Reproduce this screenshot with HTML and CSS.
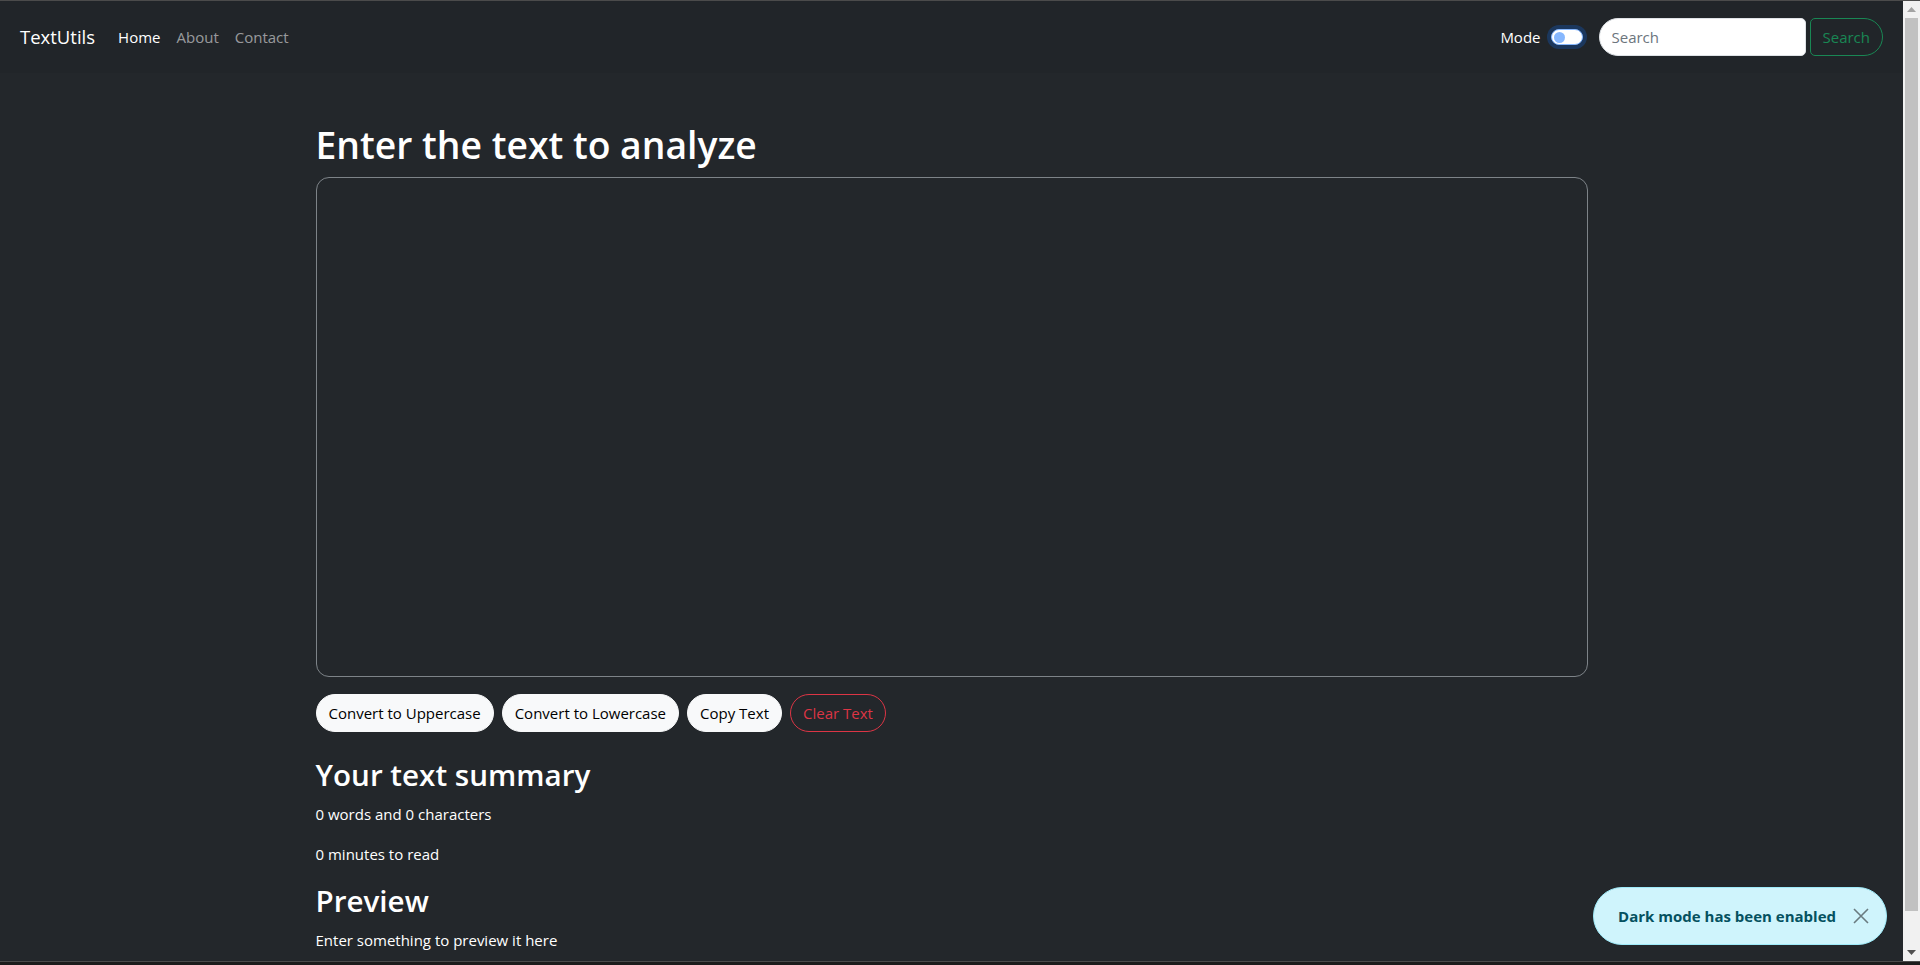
FILE: index.html
```html
<!DOCTYPE html>
<html lang="en">
<head>
<meta charset="utf-8">
<title>TextUtils</title>
<link rel="stylesheet" href="styles.css">
</head>
<body>
<div class="page">
  <nav class="navbar">
    <div class="nav-left">
      <a class="brand" href="#">TextUtils</a>
      <ul class="nav-links">
        <li><a class="nav-link active" href="#">Home</a></li>
        <li><a class="nav-link" href="#">About</a></li>
        <li><a class="nav-link" href="#">Contact</a></li>
      </ul>
    </div>
    <div class="nav-right">
      <div class="mode">
        <span class="mode-label">Mode</span>
        <span class="switch"><span class="knob"></span></span>
      </div>
      <form class="search">
        <input class="search-input" type="search" placeholder="Search">
        <button class="search-btn" type="button">Search</button>
      </form>
    </div>
  </nav>

  <main class="container">
    <h1 class="title">Enter the text to analyze</h1>
    <textarea class="textarea"></textarea>
    <div class="actions">
      <button class="btn btn-light" type="button">Convert to Uppercase</button>
      <button class="btn btn-light" type="button">Convert to Lowercase</button>
      <button class="btn btn-light" type="button">Copy Text</button>
      <button class="btn btn-danger" type="button">Clear Text</button>
    </div>
    <section class="summary">
      <h2 class="subtitle">Your text summary</h2>
      <p class="line">0 words and 0 characters</p>
      <p class="line">0 minutes to read</p>
      <h2 class="subtitle">Preview</h2>
      <p class="line">Enter something to preview it here</p>
    </section>
  </main>

  <div class="toast">
    <strong class="toast-text">Dark mode has been enabled</strong>
    <button class="toast-close" type="button" aria-label="Close">
      <svg width="16" height="16" viewBox="0 0 16 16"><path d="M1 1 L15 15 M15 1 L1 15" stroke="#6a7b80" stroke-width="1.6" fill="none"/></svg>
    </button>
  </div>
</div>

<div class="scrollbar">
  <div class="sb-arrow">
    <svg width="9" height="5" viewBox="0 0 9 5"><path d="M0 5 L4.5 0 L9 5 Z" fill="#a3a3a3"/></svg>
  </div>
  <div class="sb-track"><div class="sb-thumb"></div></div>
  <div class="sb-arrow">
    <svg width="9" height="5" viewBox="0 0 9 5"><path d="M0 0 L4.5 5 L9 0 Z" fill="#505050"/></svg>
  </div>
</div>
</body>
</html>
```

FILE: styles.css
```css
* { box-sizing: border-box; }

html {
  height: 100%;
  background: #1c1c1c;
}

body {
  margin: 0;
  height: calc(100vh - 3px);
  display: flex;
  overflow: hidden;
  border-top: 1px solid #4b4b4b;
  border-bottom: 1px solid #4b4b4b;
  font-family: "Open Sans", "Noto Sans", sans-serif;
  font-size: 15px;
  line-height: 24px;
  color: #fff;
}

.page {
  flex: 1;
  position: relative;
  display: flex;
  flex-direction: column;
  background: #23272b;
  overflow: hidden;
}

/* navbar */
.navbar {
  display: flex;
  align-items: center;
  justify-content: space-between;
  padding: 16px 20px 16px 20px;
  background: #212529;
}

.nav-left, .nav-right {
  display: flex;
  align-items: center;
}

.brand {
  font-size: 18.5px;
  line-height: 30px;
  color: #fff;
  text-decoration: none;
  margin-right: 15px;
}

.nav-links {
  display: flex;
  list-style: none;
  margin: 0;
  padding: 0;
}

.nav-link {
  display: block;
  padding: 8px 8px;
  color: rgba(255,255,255,.55);
  text-decoration: none;
}

.nav-link.active { color: #fff; }

.mode {
  display: flex;
  align-items: center;
  margin-right: 16px;
}

.mode-label { margin-right: 10px; }

.switch {
  display: flex;
  align-items: center;
  width: 32px;
  height: 16px;
  padding: 0 2px;
  border-radius: 16px;
  background: #fff;
  border: 1px solid #86b7fe;
  box-shadow: 0 0 0 4px rgba(13,110,253,.25);
}

.knob {
  width: 11px;
  height: 11px;
  border-radius: 50%;
  background: #86b7fe;
}

.search {
  display: flex;
  align-items: center;
  gap: 4px;
  margin: 0;
}

.search-input {
  width: 207px;
  height: 38px;
  padding: 6px 12px;
  font: inherit;
  color: #212529;
  background: #fff;
  border: 1px solid #dee2e6;
  border-radius: 19px 5px 5px 19px;
  outline: none;
}

.search-input::placeholder { color: #6c757d; }

.search-btn {
  height: 38px;
  padding: 6px 12px;
  font: inherit;
  color: #198754;
  background: transparent;
  border: 1px solid #198754;
  border-radius: 5px 19px 19px 5px;
}

/* main */
.container {
  width: 1272px;
  margin: 0 auto;
  padding-top: 48px;
}

.title {
  margin: 0 0 8px;
  font-size: 37.3px;
  line-height: 48px;
  font-weight: 600;
}

.textarea {
  display: block;
  width: 100%;
  height: 500px;
  margin: 0 0 17px;
  background: transparent;
  border: 1px solid #7d8388;
  border-radius: 13px;
  color: #fff;
  resize: none;
}

.actions {
  display: flex;
  gap: 8px;
}

.btn {
  height: 38px;
  padding: 6px 12px;
  font: inherit;
  border-radius: 19px;
  cursor: pointer;
}

.btn-light {
  color: #000;
  background: #f8f9fa;
  border: 1px solid #f8f9fa;
}

.btn-danger {
  color: #dc3545;
  background: transparent;
  border: 1px solid #dc3545;
}

.summary { padding-top: 24px; }

.subtitle {
  margin: 0 0 8px;
  font-size: 29.6px;
  line-height: 38px;
  font-weight: 600;
}

.line {
  margin: 0 0 16px;
}

/* toast */
.toast {
  position: absolute;
  right: 16px;
  bottom: 16px;
  display: flex;
  align-items: center;
  height: 58px;
  padding: 0 17px 0 24px;
  gap: 17px;
  background: #cff4fc;
  border: 1px solid #9eeaf9;
  border-radius: 29px;
  color: #055160;
}

.toast-text { font-weight: 700; }

.toast-close {
  display: flex;
  padding: 0;
  border: 0;
  background: transparent;
}

/* scrollbar */
.scrollbar {
  width: 17px;
  display: flex;
  flex-direction: column;
  background: #f1f1f1;
}

.sb-arrow {
  height: 17px;
  display: flex;
  align-items: center;
  justify-content: center;
}

.sb-track {
  flex: 1;
  padding: 0 2px 33px;
}

.sb-thumb {
  height: 100%;
  background: #c1c1c1;
}
```
